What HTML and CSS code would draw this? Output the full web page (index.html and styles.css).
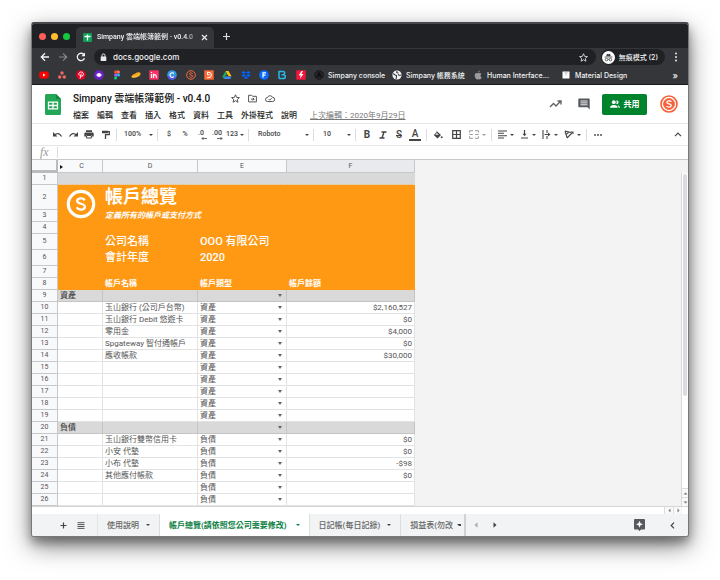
FILE: index.html
```html
<!DOCTYPE html>
<html lang="zh-Hant">
<head>
<meta charset="utf-8">
<title>Simpany 雲端帳簿範例 - v0.4.0</title>
<link rel="stylesheet" href="styles.css">
</head>
<body>
<main class="window">
  <div class="tabstrip">
    <div class="lights"><i class="red"></i><i class="yellow"></i><i class="green"></i></div>
    <div class="browser-tab">
      <svg width="9" height="9" viewBox="0 0 9 9"><rect width="9" height="9" rx="1" fill="#0f9d58"/><path d="M4.500 1.500v6M1.500 3.500h6" stroke="#fff" stroke-width="1.300"/></svg>
      <span class="tab-title">Simpany 雲端帳簿範例 - v0.4.0</span>
      <button class="plain" aria-label="關閉分頁"><svg width="7" height="7" viewBox="0 0 7 7"><path d="M1 1l5 5M6 1l-5 5" stroke="#e8eaed" stroke-width="1.200"/></svg></button>
    </div>
    <button class="plain new-tab" aria-label="新分頁"><svg width="9" height="9" viewBox="0 0 9 9"><path d="M4.500 1v7M1 4.500h7" stroke="#dadce0" stroke-width="1.200"/></svg></button>
  </div>
  <div class="navbar">
    <button class="plain nav-button" aria-label="上一頁"><svg width="10" height="10" viewBox="0 0 10 10" fill="none" stroke="#f1f3f4" stroke-width="1.300"><path d="M9 5H1.500M5 1.300L1.300 5 5 8.700"/></svg></button>
    <button class="plain nav-button" aria-label="下一頁"><svg width="10" height="10" viewBox="0 0 10 10" fill="none" stroke="#85878b" stroke-width="1.200"><path d="M1 5h7.500M5 1.300L8.700 5 5 8.700"/></svg></button>
    <button class="plain nav-button" aria-label="重新載入"><svg width="10" height="10" viewBox="0 0 10 10" fill="none" stroke="#f1f3f4" stroke-width="1.300"><path d="M8.500 6.200A3.700 3.700 0 1 1 7.800 2.500"/><path d="M9 .5v3.700H5.300z" fill="#f1f3f4" stroke="none"/></svg></button>
    <div class="address">
      <svg width="7" height="9" viewBox="0 0 7 9"><rect x=".7" y="3.500" width="5.600" height="4.500" rx=".6" fill="#e8eaed"/><path d="M2 4V2.400a1.500 1.500 0 0 1 3 0V4" fill="none" stroke="#e8eaed"/></svg>
      <input class="url" aria-label="網址" value="docs.google.com">
      <svg width="9" height="9" viewBox="0 0 24 24"><path d="M12 2l3 7 7.500.6-5.700 5 1.700 7.400L12 18l-6.500 4 1.700-7.400-5.700-5L9 9z" fill="none" stroke="#e8eaed" stroke-width="2.200"/></svg>
    </div>
    <button class="incognito"><svg width="13" height="13" viewBox="0 0 13 13"><circle cx="6.500" cy="6.500" r="6.500" fill="#fff"/><path d="M4.200 5.200L5 2.800l1.500.4L8 2.800l.8 2.400z" fill="#3c4043"/><path d="M2.500 6h8M5.800 8.300h1.400" stroke="#3c4043" stroke-width=".8"/><g fill="none" stroke="#3c4043" stroke-width=".8"><circle cx="4.500" cy="8.600" r="1.300"/><circle cx="8.500" cy="8.600" r="1.300"/></g></svg>無痕模式 (2)</button>
    <button class="plain kebab" aria-label="選單"><svg width="4" height="10" viewBox="0 0 4 10" fill="#e8eaed"><circle cx="2" cy="1.500" r="1"/><circle cx="2" cy="5" r="1"/><circle cx="2" cy="8.500" r="1"/></svg></button>
  </div>
  <nav class="bookmarks" aria-label="書籤">
    <div class="marks">
      <svg viewBox="0 0 10 10"><rect x=".3" y="1.500" width="9.400" height="7" rx="2" fill="#f00"/><path d="M4 3.500L6.700 5 4 6.500z" fill="#fff"/></svg>
      <svg viewBox="0 0 10 10" fill="#f06a6a"><circle cx="5" cy="3" r="1.700"/><circle cx="2.700" cy="7" r="1.700"/><circle cx="7.300" cy="7" r="1.700"/></svg>
      <svg viewBox="0 0 10 10"><circle cx="5" cy="5" r="4.800" fill="#e60023"/><path d="M3.400 5.600C2 3.300 3.600 2 5.200 2 8 2 8 6.200 5.800 6.200 5 6.200 4.800 5.700 4.800 5.700M5.200 3.700L4.100 8.600" fill="none" stroke="#fff"/></svg>
      <svg viewBox="0 0 10 10"><circle cx="5" cy="5" r="4.800" fill="#6b20c9"/><path d="M1.800 5Q5 .8 8.200 5 5 9.200 1.800 5" fill="#c9b0ff"/><circle cx="5" cy="5" r="1.800" fill="#fff"/></svg>
      <svg viewBox="0 0 10 10"><path d="M5 .5H3.500a1.500 1.500 0 0 0 0 3H5z" fill="#f24e1e"/><path d="M5 .5h1.500a1.500 1.500 0 0 1 0 3H5z" fill="#ff7262"/><path d="M5 3.500H3.500a1.500 1.500 0 0 0 0 3H5z" fill="#a259ff"/><circle cx="6.500" cy="5" r="1.500" fill="#1abcfe"/><path d="M5 6.500H3.500A1.500 1.500 0 1 0 5 8z" fill="#0acf83"/></svg>
      <svg viewBox="0 0 10 10"><path d="M.3 6.700C1 4.500 3 4.300 4.300 3.500 6 2.300 8.500 1.700 9.700 3.300 9.500 6 7 7.200 5 7.500 3 8 1 8 .3 6.700z" fill="#f9a51a"/><path d="M1 7q5 .5 8-3" fill="none" stroke="#ffd36b" stroke-width=".7"/></svg>
      <svg viewBox="0 0 10 10"><rect x=".3" y=".3" width="9.400" height="9.400" fill="#ff3366"/><path d="M2.500 2v1M2.500 4v4M4.500 8V3.800M4.500 5.500Q7.300 3 7.500 8" fill="none" stroke="#fff" stroke-width="1.200"/></svg>
      <svg viewBox="0 0 10 10"><circle cx="5" cy="5" r="4.800" fill="#2f9be0"/><path d="M.3 5.800A4.800 4.800 0 0 0 9.300 7z" fill="#5a4ae8"/><path d="M6.900 3.500A2.300 2.300 0 1 0 6.900 6.700" fill="none" stroke="#fff" stroke-width="1.100"/></svg>
      <svg viewBox="0 0 10 10" fill="none" stroke="#f26b3a"><circle cx="5" cy="5" r="4.300"/><path d="M6.700 3.500C5.700 2.300 3.500 2.800 3.500 4c0 1.400 3.200.7 3.200 2.200 0 1.300-2.400 1.600-3.400.3"/></svg>
      <svg viewBox="0 0 10 10"><rect x=".3" y=".3" width="9.400" height="9.400" fill="#ff6a33"/><path d="M3 2.300h2Q7.300 2.300 7.300 5T5 7.700H3M3.500 2.500v2.300h2" fill="none" stroke="#fff"/></svg>
      <svg viewBox="0 0 10 10"><path d="M3.500 1h3l3 5.200h-3z" fill="#ffc107"/><path d="M3.500 1L.4 6.500l1.500 2.600L5 3.700z" fill="#1fa463"/><path d="M3.400 6.400h6.200L8.100 9.100H1.900z" fill="#4285f4"/></svg>
      <svg viewBox="0 0 10 10" fill="#0061ff"><path d="M2.700 1L5 2.500 2.700 4 .4 2.500zM7.300 1l2.300 1.500L7.300 4 5 2.500zM2.700 4L5 5.500 2.700 7 .4 5.500zM7.300 4l2.300 1.500L7.300 7 5 5.500zM5 6.200l2.200 1.500L5 9.200 2.800 7.700z"/></svg>
      <svg viewBox="0 0 10 10"><circle cx="5" cy="5" r="4.800" fill="#0a6cff"/><path d="M4 7.700V2.900h3M4 5.200h2.500" fill="none" stroke="#fff" stroke-width="1.200"/></svg>
      <svg viewBox="0 0 10 10"><path d="M2 8.600V1.500H6Q8 1.500 7.700 3.300 7.500 4.700 5.500 4.800H4.500M6 4.800Q8.300 5 8.300 6.700 8.300 8.600 6 8.600H2" fill="none" stroke="#29b6e8" stroke-width="1.500"/></svg>
      <svg viewBox="0 0 10 10"><rect x=".3" y=".3" width="9.400" height="9.400" fill="#f5153b"/><path d="M5.500 1L2.700 5.500h2L4 9l3.400-5H5.300L7 1z" fill="#fff"/></svg>
    </div>
    <a href="#" class="mark-console"><svg viewBox="0 0 10 10"><circle cx="5" cy="5" r="4.300" fill="#242528" stroke="#17181a"/><path d="M3 7l2-4.500L7 7M5 5v2" fill="none" stroke="#090909"/></svg>Simpany console</a>
    <a href="#" class="mark-books"><svg viewBox="0 0 10 10"><circle cx="5" cy="5" r="4.600" fill="#f1f3f4"/><path d="M1.200 3.500L3 5l1.500.5V7L4 9M5 1L4.700 2.500l1.800.7M6 4.500l1.500 1L9.300 5" fill="none" stroke="#3c4043" stroke-width="1.100"/></svg>Simpany 帳務系統</a>
    <a href="#" class="mark-human"><svg viewBox="0 0 10 10" fill="#9a9ca0"><path d="M6.500 3C7.200 2.900 8 3.200 8.400 3.900 7 4.900 7.200 6.500 8.700 7.200 8.200 8.400 7.600 9.500 6.700 9.400 6 9.100 5.500 9 4.600 9.400 3.200 9.900 1.600 7 1.700 5.300 1.800 3.500 3.300 2.600 4.900 3.300zM5 2.700Q5 .9 6.700.5 6.800 2.300 5 2.700z"/></svg>Human Interface...</a>
    <a href="#" class="mark-material"><svg viewBox="0 0 10 10"><rect x="1.500" y="1.500" width="7" height="7" fill="#fff"/><path d="M3 2h4L5 6z" fill="#d5d7da"/></svg>Material Design</a>
    <button class="plain more-marks" aria-label="更多書籤">»</button>
  </nav>

  <header class="doc-header">
    <svg class="doc-logo" width="16" height="21" viewBox="0 0 16 21"><path d="M1.500 0H11l5 5v14.500a1.500 1.500 0 0 1-1.500 1.500h-13A1.500 1.500 0 0 1 0 19.500v-18A1.500 1.500 0 0 1 1.500 0z" fill="#23a655"/><path d="M11 0l5 5h-5z" fill="#148840"/><path d="M3.500 8.200h9v6.600h-9zM8 8.200v6.600M3.500 11.500h9" fill="none" stroke="#fff" stroke-width="1.300"/></svg>
    <div class="doc-info">
      <div class="title-row">
        <h1>Simpany 雲端帳簿範例 - v0.4.0</h1>
        <button class="plain" aria-label="加上星號"><svg width="9" height="9" viewBox="0 0 24 24"><path d="M12 2l3 7 7.500.6-5.700 5 1.700 7.400L12 18l-6.500 4 1.700-7.400-5.700-5L9 9z" fill="none" stroke="#444" stroke-width="2.400"/></svg></button>
        <button class="plain" aria-label="移動"><svg width="9" height="9" viewBox="0 0 9 9" fill="none" stroke="#444" stroke-width=".9"><path d="M.6 1.300h3l1 1h3.800v5.600H.6zM3 5.200h3M4.800 3.900l1.300 1.300-1.300 1.300"/></svg></button>
        <button class="plain" aria-label="文件狀態"><svg width="10" height="9" viewBox="0 0 10 9" fill="none" stroke="#444" stroke-width=".9"><path d="M2.500 7.500a2 2 0 0 1 0-4 2.700 2.700 0 0 1 5-.2 2 2 0 0 1 .2 4.200zM3.500 5l1.200 1.200 2-2"/></svg></button>
      </div>
      <nav class="menus">
        <a href="#">檔案</a><a href="#">編輯</a><a href="#">查看</a><a href="#">插入</a><a href="#">格式</a><a href="#">資料</a><a href="#">工具</a><a href="#">外掛程式</a><a href="#">說明</a>
        <a href="#" class="last-edit">上次編輯：2020年9月29日</a>
      </nav>
    </div>
    <div class="doc-actions">
      <button class="plain" aria-label="活動"><svg width="13" height="10" viewBox="0 0 13 10" fill="none" stroke="#5f6368" stroke-width="1.400"><path d="M1 8l3.500-3.500 2.500 2.500L11.500 2.300M8.500 2H12v3.500"/></svg></button>
      <button class="plain" aria-label="留言"><svg width="12" height="12" viewBox="0 0 12 12"><path d="M1 .5h10a.7.7 0 0 1 .7.700V11.500L9.500 9.300H1a.7.7 0 0 1-.7-.7V1.200A.7.7 0 0 1 1 .5z" fill="#55585d"/><path d="M2.500 3h7M2.500 4.900h7M2.500 6.800h7" stroke="#fff" stroke-width=".9"/></svg></button>
      <button class="share"><svg width="10" height="8" viewBox="0 0 10 8" fill="#fff"><circle cx="3.800" cy="2.200" r="1.900"/><path d="M0 7.800Q0 4.900 3.800 4.900T7.600 7.800z"/><path d="M6.200.5a1.800 1.800 0 1 1 0 3.400Q7.200 2.200 6.200.5zM7.300 5.100Q10 5.700 10 7.800H8.500Q8.500 6 7.300 5.100z"/></svg>共用</button>
      <svg width="18" height="18" viewBox="0 0 18 18" fill="none" stroke="#f4633a"><circle cx="9" cy="9" r="8" stroke-width="1.700"/><circle cx="9" cy="9" r="5.400" fill="#f4633a"/><path d="M11.300 6.900C10.300 5.300 6.900 5.700 6.900 7.500c0 2 4.400.9 4.400 3 0 1.900-3.600 2.200-4.800.5" stroke="#fff" stroke-width="1.300"/></svg>
    </div>
  </header>

  <div class="toolbar" role="toolbar" aria-label="工具列">
    <button aria-label="復原"><svg width="11" height="9" viewBox="0 0 11 9"><path d="M2.500 5Q6.500 1.500 9.500 6.500" fill="none" stroke="#444" stroke-width="1.300"/><path d="M1 2v4.500h4.500z" fill="#444"/></svg></button>
    <button aria-label="重做"><svg width="11" height="9" viewBox="0 0 11 9"><path d="M8.500 5Q4.500 1.500 1.500 6.500" fill="none" stroke="#444" stroke-width="1.300"/><path d="M10 2v4.500H5.500z" fill="#444"/></svg></button>
    <button aria-label="列印"><svg width="10" height="9" viewBox="0 0 10 9"><path d="M2 .3h6V2H2zM1.300 2.500h7.400a1 1 0 0 1 1 1v3H8V5H2v1.500H.3v-3a1 1 0 0 1 1-1z" fill="#444"/><path d="M2.600 5.500h4.800V8H2.600z" fill="none" stroke="#444"/></svg></button>
    <button aria-label="格式刷"><svg width="9" height="10" viewBox="0 0 9 10"><path d="M1 .7h6v2.600H1z" fill="#444"/><path d="M7 1.700h1.300v3H4.500V9" fill="none" stroke="#444" stroke-width="1.300"/></svg></button>
    <i class="sep"></i>
    <label class="pick pick-zoom"><select aria-label="縮放"><option>100%</option></select></label>
    <i class="sep"></i>
    <button>$</button><button>%</button>
    <button class="decimals">.0<svg width="6" height="3" viewBox="0 0 6 3"><path d="M6 1.500H1M2.500 0L1 1.500 2.500 3" fill="none" stroke="#444" stroke-width=".8"/></svg></button>
    <button class="decimals">.00<svg width="6" height="3" viewBox="0 0 6 3"><path d="M0 1.500h5M3.500 0L5 1.500 3.500 3" fill="none" stroke="#444" stroke-width=".8"/></svg></button>
    <button class="drop formats">123</button>
    <i class="sep"></i>
    <label class="pick pick-font"><select aria-label="字型"><option>Roboto</option></select></label>
    <i class="sep"></i>
    <label class="pick pick-size"><select aria-label="字型大小"><option>10</option></select></label>
    <i class="sep"></i>
    <button class="letter" aria-label="粗體"><b>B</b></button>
    <button aria-label="斜體"><svg width="8" height="8" viewBox="0 0 8 8"><path d="M2.500 1h5M.5 7h5M5 1L3 7" stroke="#444" stroke-width="1.400"/></svg></button>
    <button class="letter" aria-label="刪除線"><s>S</s></button>
    <button class="letter" aria-label="文字顏色"><span class="text-color">A</span></button>
    <i class="sep"></i>
    <button aria-label="填滿顏色"><svg width="10" height="10" viewBox="0 0 10 10"><path d="M3 .5l5 4.500-3.500 3.500L.8 5l3-3z" fill="#444"/><path d="M3.800 3L2.300 4.700h3.500z" fill="#fff"/><circle cx="8.700" cy="7.200" r="1" fill="#444"/></svg></button>
    <button class="borders" aria-label="框線"><svg width="9" height="9" viewBox="0 0 9 9"><path d="M.7.7h7.600v7.600H.7zM4.500.7v7.600M.7 4.500h7.600" fill="none" stroke="#444" stroke-width="1.200"/></svg></button>
    <button class="drop faded" aria-label="合併儲存格"><svg width="10" height="9" viewBox="0 0 10 9"><path d="M4 .7H.6v2M6 .7h3.400v2M4 8.300H.6v-2M6 8.300h3.400v-2M.5 4.500h3.300M9.500 4.500H6.200" fill="none" stroke="#999"/></svg></button>
    <i class="sep"></i>
    <button class="drop" aria-label="水平對齊"><svg width="9" height="9" viewBox="0 0 9 9"><path d="M0 1h9M0 3.300h6M0 5.700h9M0 8h6" stroke="#444" stroke-width="1.100"/></svg></button>
    <button class="drop" aria-label="垂直對齊"><svg width="9" height="9" viewBox="0 0 9 9"><path d="M1 8h7M4.500 0v5" stroke="#444" stroke-width="1.200"/><path d="M2.500 3.800h4l-2 2.500z" fill="#444"/></svg></button>
    <button class="drop" aria-label="文字換行"><svg width="9" height="9" viewBox="0 0 9 9"><path d="M1 0v9M5 0v3M5 6v3M2.500 4.500h4" stroke="#444" stroke-width="1.100"/><path d="M6 2.500v4l2.500-2z" fill="#444"/></svg></button>
    <button class="drop" aria-label="文字旋轉"><svg width="10" height="9" viewBox="0 0 10 9"><path d="M1 1l2 6.500M1 1l6 1.500M2 4.500L5 2M3 8l5-5" fill="none" stroke="#444" stroke-width="1.100"/><path d="M6.500 1.500h3v3z" fill="#444"/></svg></button>
    <i class="sep"></i>
    <button aria-label="更多"><svg width="8" height="2" viewBox="0 0 8 2" fill="#444"><circle cx="1" cy="1" r=".9"/><circle cx="4" cy="1" r=".9"/><circle cx="7" cy="1" r=".9"/></svg></button>
    <button class="collapse" aria-label="隱藏選單"><svg width="8" height="5" viewBox="0 0 8 5"><path d="M1 4.200l3-3 3 3" fill="none" stroke="#444" stroke-width="1.200"/></svg></button>
  </div>
  <div class="formula"><label for="fx">fx</label><input id="fx"></div>

  <div class="sheet">
    <div class="sheet-scroll">
    <table>
      <colgroup><col class="col-n"><col class="col-c"><col class="col-d"><col class="col-e"><col class="col-f"></colgroup>
      <thead><tr><th class="corner"></th><th class="first">C</th><th>D</th><th>E</th><th class="selected">F</th></tr></thead>
      <tbody>
        <tr class="gray frozen"><th>1</th><td></td><td></td><td></td><td></td></tr>
        <tr class="brand tall"><th>2</th><td rowspan="2" class="logo"><svg width="30" height="30" viewBox="0 0 30 30" fill="none" stroke="#fff"><circle cx="15" cy="15" r="12.700" stroke-width="3.200"/><path d="M18.700 11.300C17 8.400 11.200 9 11.200 12c0 3.600 7.700 1.900 7.700 5.700 0 3.500-6.300 3.800-8.200.7" stroke-width="2.300"/></svg></td><td class="heading" colspan="3">帳戶總覽</td></tr>
        <tr class="brand"><th>3</th><td class="subtitle" colspan="3">定義所有的帳戶或支付方式</td></tr>
        <tr class="brand"><th>4</th><td></td><td></td><td></td><td></td></tr>
        <tr class="brand info"><th>5</th><td></td><td>公司名稱</td><td>OOO 有限公司</td><td></td></tr>
        <tr class="brand info"><th>6</th><td></td><td>會計年度</td><td>2020</td><td></td></tr>
        <tr class="brand"><th>7</th><td></td><td></td><td></td><td></td></tr>
        <tr class="brand labels"><th>8</th><td></td><td>帳戶名稱</td><td>帳戶類型</td><td>帳戶餘額</td></tr>
        <tr class="gray group"><th>9</th><td>資產</td><td></td><td class="list"></td><td></td></tr>
        <tr><th>10</th><td></td><td>玉山銀行 (公司戶台幣)</td><td class="list">資產</td><td class="num">$2,160,527</td></tr>
        <tr><th>11</th><td></td><td>玉山銀行 Debit 悠遊卡</td><td class="list">資產</td><td class="num">$0</td></tr>
        <tr><th>12</th><td></td><td>零用金</td><td class="list">資產</td><td class="num">$4,000</td></tr>
        <tr><th>13</th><td></td><td>Spgateway 智付通帳戶</td><td class="list">資產</td><td class="num">$0</td></tr>
        <tr><th>14</th><td></td><td>應收帳款</td><td class="list">資產</td><td class="num">$30,000</td></tr>
        <tr><th>15</th><td></td><td></td><td class="list">資產</td><td></td></tr>
        <tr><th>16</th><td></td><td></td><td class="list">資產</td><td></td></tr>
        <tr><th>17</th><td></td><td></td><td class="list">資產</td><td></td></tr>
        <tr><th>18</th><td></td><td></td><td class="list">資產</td><td></td></tr>
        <tr><th>19</th><td></td><td></td><td class="list">資產</td><td></td></tr>
        <tr class="gray group"><th>20</th><td>負債</td><td></td><td class="list"></td><td></td></tr>
        <tr><th>21</th><td></td><td>玉山銀行雙幣信用卡</td><td class="list">負債</td><td class="num">$0</td></tr>
        <tr><th>22</th><td></td><td>小安 代墊</td><td class="list">負債</td><td class="num">$0</td></tr>
        <tr><th>23</th><td></td><td>小布 代墊</td><td class="list">負債</td><td class="num">-$98</td></tr>
        <tr><th>24</th><td></td><td>其他應付帳款</td><td class="list">負債</td><td class="num">$0</td></tr>
        <tr><th>25</th><td></td><td></td><td class="list">負債</td><td></td></tr>
        <tr><th>26</th><td></td><td></td><td class="list">負債</td><td></td></tr>
      </tbody>
    </table>
    </div>
    <div class="vscroll"><i class="thumb"></i><button aria-label="向上捲動"><svg width="5" height="3" viewBox="0 0 5 3"><path d="M.5 2.500h4l-2-2z" fill="#777"/></svg></button><button aria-label="向下捲動"><svg width="5" height="3" viewBox="0 0 5 3"><path d="M.5.5h4l-2 2z" fill="#777"/></svg></button></div>
  </div>
  <div class="hscroll"><button aria-label="向左捲動"><svg width="3" height="5" viewBox="0 0 3 5"><path d="M2.500.5v4l-2-2z" fill="#777"/></svg></button><button aria-label="向右捲動"><svg width="3" height="5" viewBox="0 0 3 5"><path d="M.5.5v4l2-2z" fill="#777"/></svg></button></div>

  <footer class="sheet-tabs">
    <button class="plain add" aria-label="新增工作表"><svg width="7" height="7" viewBox="0 0 7 7"><path d="M3.500.5v6M.5 3.500h6" stroke="#444" stroke-width="1.200"/></svg></button>
    <button class="plain all" aria-label="所有工作表"><svg width="8" height="7" viewBox="0 0 8 7"><path d="M.5.700h7M.5 2.600h7M.5 4.500h7M.5 6.400h7" stroke="#555"/></svg></button>
    <button class="sheet-tab">使用說明</button>
    <button class="sheet-tab active">帳戶總覽(請依照您公司需要修改)</button>
    <button class="sheet-tab">日記帳(每日記錄)</button>
    <button class="sheet-tab clipped">損益表(勿改</button>
    <button class="plain pager" aria-label="上一個"><svg width="4" height="6" viewBox="0 0 4 6"><path d="M3.500.3v5.400L.5 3z" fill="#aaa"/></svg></button>
    <button class="plain pager" aria-label="下一個"><svg width="4" height="6" viewBox="0 0 4 6"><path d="M.5.3v5.400l3-2.700z" fill="#444"/></svg></button>
    <button class="plain explore" aria-label="探索"><svg width="11" height="12" viewBox="0 0 11 12"><path d="M1 0h9a1 1 0 0 1 1 1v8.500a1 1 0 0 1-1 1H7L5.500 12 4 10.500H1a1 1 0 0 1-1-1V1a1 1 0 0 1 1-1z" fill="#55585c"/><path d="M5.500 1.800l1 2.500 2.500 1-2.500 1-1 2.500-1-2.500-2.500-1 2.500-1z" fill="#fff"/></svg></button>
    <button class="plain side" aria-label="顯示側邊面板"><svg width="5" height="7" viewBox="0 0 5 7"><path d="M4 .7L1.200 3.500 4 6.300" fill="none" stroke="#444" stroke-width="1.200"/></svg></button>
  </footer>
</main>
</body>
</html>
```
FILE: styles.css
```css
* { box-sizing: border-box; }

body {
  margin: 0;
  padding: 22px 31px 42px;
  background: #fff;
  color: #222;
  font-family: Roboto, "Noto Sans CJK TC", sans-serif;
  font-size: 8px;
  line-height: 11px;
}

svg { display: block; flex: none; }
a { color: inherit; text-decoration: none; }
button, input, select {
  margin: 0;
  padding: 0;
  border: 0;
  background: none;
  color: inherit;
  font: inherit;
  outline: 0;
}
button { display: flex; align-items: center; justify-content: center; flex: none; white-space: nowrap; }

.window {
  border: 1px solid #77787a;
  border-top: 2px solid #47484b;
  border-radius: 3px;
  background: #fff;
  overflow: hidden;
  box-shadow: 0 9px 24px rgba(0, 0, 0, .5), 0 6px 10px rgba(0, 0, 0, .3);
}

/* Browser frame */
.tabstrip, .navbar, .bookmarks {
  display: flex;
  align-items: center;
  color: #f1f3f4;
  font-family: Inter, "Noto Sans CJK TC", sans-serif;
  font-weight: 500;
}
.tabstrip { height: 24px; background: #202124; }
.lights { display: flex; gap: 5px; padding-left: 7px; width: 44px; }
.lights i { width: 7px; height: 7px; border-radius: 50%; }
.red { background: #ff5f57; }
.yellow { background: #febc2e; }
.green { background: #14c840; }
.browser-tab {
  display: flex;
  align-items: center;
  align-self: flex-end;
  gap: 5px;
  width: 138px;
  height: 21px;
  padding: 0 6px 0 7px;
  border-radius: 5px 5px 0 0;
  background: #35363a;
}
.tab-title {
  flex: 1;
  white-space: nowrap;
  font-family: Roboto, "Noto Sans CJK TC", sans-serif;
  font-size: 7px;
  mask-image: linear-gradient(90deg, #000 88%, rgba(0, 0, 0, .3));
}
.new-tab { margin-left: 8px; }

.navbar { height: 18px; padding: 0 10px 0 8px; background: #35363a; }
.nav-button { width: 10px; margin-right: 8px; }
.address {
  display: flex;
  align-items: center;
  flex: 1;
  gap: 6px;
  height: 16px;
  padding: 0 8px 0 6px;
  border-radius: 8px;
  background: #202124;
}
.url { flex: 1; min-width: 0; font-size: 8px; }
.incognito {
  gap: 4px;
  height: 16px;
  margin-left: 5px;
  padding: 0 7px 0 1px;
  border-radius: 8px;
  background: #202124;
  font-size: 7px;
}
.kebab { margin-left: 9px; }

.bookmarks {
  height: 19px;
  padding: 0 10px 0 7px;
  border-bottom: 1px solid #17181a;
  background: #35363a;
  font-size: 7px;
}
.bookmarks svg { width: 10px; height: 10px; }
.marks { display: flex; justify-content: space-between; width: 267px; margin-right: 8px; }
.bookmarks a { display: flex; align-items: center; gap: 4px; white-space: nowrap; }
.mark-console { width: 78px; }
.mark-books { width: 81px; }
.mark-human { width: 88px; }
.more-marks { margin-left: auto; font-size: 9px; }

/* Document header */
.doc-header { display: flex; height: 39px; padding: 0 10px 0 13px; border-bottom: 1px solid #e4e6e8; }
.doc-logo { margin-top: 9px; }
.doc-info { margin: 6px 0 0 12px; }
.title-row { display: flex; align-items: center; gap: 8px; height: 14px; }
h1 { margin: 0 13px 0 0; font-size: 10px; font-weight: 500; white-space: nowrap; color: #111; }
.menus { display: flex; gap: 8px; margin-top: 5px; white-space: nowrap; font-weight: 500; }
.last-edit { margin-left: 5px; color: #777; font-weight: 400; text-decoration: underline; }
.doc-actions { display: flex; align-items: center; gap: 13px; margin-left: auto; height: 38px; }
.doc-actions .plain { width: 16px; }
.share {
  gap: 4px;
  width: 45px;
  height: 21px;
  margin-left: -3px;
  border-radius: 2px;
  background: #00832d;
  color: #fff;
  font-weight: 700;
}

/* Toolbar */
.toolbar {
  display: flex;
  align-items: center;
  height: 22px;
  padding: 0 2px 0 17px;
  border-bottom: 1px solid #e4e6e8;
  color: #444;
  font-size: 7px;
  font-weight: 500;
}
.toolbar button { width: 16px; height: 18px; }
.sep { flex: none; width: 1px; height: 12px; margin: 0 3px; background: #dadce0; }
.pick { display: flex; align-items: center; }
.pick select { flex: 1; min-width: 0; appearance: none; }
.pick::after, .toolbar .drop::after, .sheet-tab::after {
  content: "";
  flex: none;
  border: 2px solid transparent;
  border-top-color: #444;
  border-bottom: 0;
}
.pick-zoom { width: 34px; padding: 0 1px 0 4px; }
.pick-font { width: 58px; padding: 0 1px 0 6px; }
.pick-size { width: 35px; padding: 0 1px 0 6px; }
.toolbar .decimals { flex-direction: column; align-items: center; line-height: 8px; }
.decimals svg { align-self: flex-end; margin-right: 2px; }
.toolbar .drop { width: 22px; gap: 3px; }
.toolbar .formats { width: 20px; gap: 2px; }
.toolbar .borders { width: 20px; }
.toolbar .letter { font-size: 10px; }
.text-color { padding: 0 3px; border-bottom: 2px solid #444; }
.faded::after { opacity: .5; }
.toolbar .collapse { margin-left: auto; }

.formula { display: flex; align-items: center; height: 13px; }
.formula label {
  width: 26px;
  padding-left: 8px;
  border-right: 1px solid #dadce0;
  color: #999;
  font: italic 12px/11px "Liberation Serif", serif;
}
.formula input { flex: 1; min-width: 0; }

/* Grid */
.sheet { display: flex; border-top: 1px solid #c8c9ca; border-bottom: 1px solid #d5d5d5; background: #f3f3f3; }
.sheet-scroll { flex: 1; min-width: 0; }
table { width: 383px; table-layout: fixed; border-collapse: separate; border-spacing: 0; }
.col-n { width: 26px; }
.col-c { width: 45px; }
.col-d { width: 95px; }
.col-e { width: 89px; }
.col-f { width: 128px; }
th, td {
  height: 12px;
  padding: 0 2px;
  border: solid #e2e3e3;
  border-width: 0 1px 1px 0;
  background: #fff;
  line-height: 11px;
  text-align: left;
  white-space: nowrap;
}
th {
  border-color: #c6c8ca;
  background: #f8f9fa;
  color: #555;
  font-size: 7px;
  font-weight: 400;
  text-align: center;
}
td { color: #555; }
thead th { height: 13px; }
.corner { border-color: #b9bbbd; border-width: 0 2px 3px 0; }
.selected { background: #e8eaed; }
.first::before {
  content: "";
  float: left;
  margin-top: 4px;
  border: 2px solid transparent;
  border-left: 3px solid #111;
  border-right: 0;
}
.gray td { background: #d9d9d9; border-color: #c4c4c4; }
.frozen td { border-right-color: #d9d9d9; border-bottom: 1px dotted #f2c27c; }
.group td { font-weight: 500; color: #444; }
.brand td { border-color: #ff9913; background: #ff9913; color: #fff; }
.tall th { height: 25px; }
.brand .logo { padding: 2px 0 0 8px; vertical-align: middle; }
.brand .heading { font-size: 18px; font-weight: 700; line-height: 24px; }
.subtitle { font-style: italic; font-weight: 700; }
.info td, .info th { height: 16px; line-height: 15px; }
.info td { font-size: 11px; font-weight: 500; }
.labels td { font-weight: 700; }
.list { vertical-align: top; }
.list::after {
  content: "";
  float: right;
  margin: 4px 2px 4px 0;
  border: 2px solid transparent;
  border-top: 3px solid #666;
  border-bottom: 0;
}
.num { text-align: right; }

.vscroll {
  display: flex;
  flex-direction: column;
  width: 7px;
  margin-top: 13px;
  border-left: 1px solid #d8d8d8;
  background: #fff;
}
.vscroll button { height: 9px; border-top: 1px solid #ddd; background: #f8f9fa; }
.thumb { height: 222px; margin: 1px 1px auto; border-radius: 3px; background: #dadce0; }
.hscroll { display: flex; justify-content: flex-end; height: 7px; padding-right: 6px; margin-left: 26px; }
.hscroll button { width: 9px; border-left: 1px solid #ddd; background: #f8f9fa; }

/* Sheet tabs */
.sheet-tabs { display: flex; align-items: center; height: 22px; padding: 0 13px 0 28px; background: #f1f3f4; color: #666; }
.add { width: 7px; }
.all { width: 8px; margin: 0 12px 0 10px; }
.sheet-tab { gap: 7px; height: 22px; padding: 0 9px; border-right: 1px solid #dcdee0; font-weight: 500; }
.all + .sheet-tab { border-left: 1px solid #e2e4e6; }
.sheet-tab.active { gap: 9px; background: #fff; color: #0b8043; font-weight: 700; }
.sheet-tab.active::after { border-top-color: #0b8043; }
.sheet-tab.clipped { gap: 4px; padding-right: 3px; border-right: 2px solid #cfd1d3; }
.clipped::after { width: 2px; border-right: 0; }
.pager { width: 18px; margin-left: 1px; }
.explore { margin-left: auto; }
.side { margin-left: 25px; }
```
